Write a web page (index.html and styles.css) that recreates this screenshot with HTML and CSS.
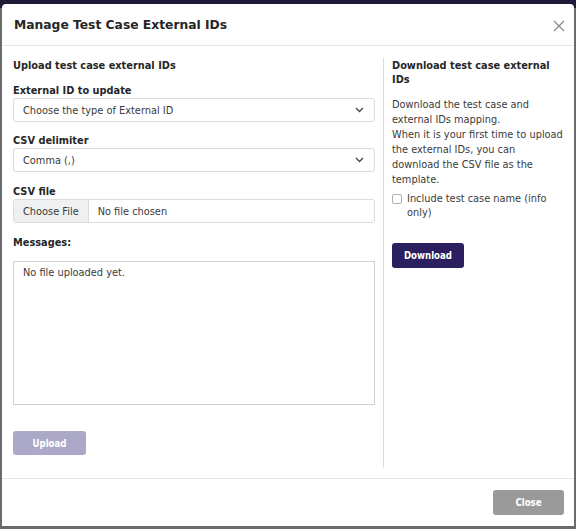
FILE: index.html
```html
<!DOCTYPE html>
<html lang="en">
<head>
  <meta charset="UTF-8" />
  <meta name="viewport" content="width=device-width, initial-scale=1.0" />
  <title>Manage Test Case External IDs</title>
  <link rel="stylesheet" href="styles.css">
</head>
<body>
  <div class="backdrop">
    <div class="modal">
      <div class="modal-header">
        <h1>Manage Test Case External IDs</h1>
        <span class="close-x">
          <svg width="12" height="12" viewBox="0 0 12 12"><path d="M1 1L11 11M11 1L1 11" stroke="#8a8a8a" stroke-width="1.3" fill="none"/></svg>
        </span>
      </div>

      <div class="modal-body">
        <div class="col-upload">
          <h3>Upload test case external IDs</h3>

          <label class="field-label">External ID to update</label>
          <div class="select">
            <span>Choose the type of External ID</span>
            <svg width="9" height="6" viewBox="0 0 9 6"><path d="M1 1L4.5 4.5L8 1" stroke="#444" stroke-width="1.3" fill="none"/></svg>
          </div>

          <label class="field-label">CSV delimiter</label>
          <div class="select">
            <span>Comma (,)</span>
            <svg width="9" height="6" viewBox="0 0 9 6"><path d="M1 1L4.5 4.5L8 1" stroke="#444" stroke-width="1.3" fill="none"/></svg>
          </div>

          <label class="field-label">CSV file</label>
          <div class="file-input">
            <span class="file-btn">Choose File</span>
            <span class="file-name">No file chosen</span>
          </div>

          <label class="field-label messages-label">Messages:</label>
          <div class="messages">No file uploaded yet.</div>

          <button class="btn btn-upload" disabled>Upload</button>
        </div>

        <div class="col-download">
          <h3>Download test case external IDs</h3>
          <p>Download the test case and external IDs mapping.<br>When it is your first time to upload the external IDs, you can download the CSV file as the template.</p>
          <label class="check">
            <span class="box"></span>
            <span>Include test case name (info only)</span>
          </label>
          <button class="btn btn-download">Download</button>
        </div>
      </div>

      <div class="modal-footer">
        <button class="btn btn-close">Close</button>
      </div>
    </div>
  </div>
</body>
</html>
```

FILE: styles.css
```css
body {
  margin: 0;
  font-family: "DejaVu Sans", Verdana, sans-serif;
  color: #333;
  background-color: #6b6b6b;
}
.backdrop {
  width: 576px;
  height: 529px;
  box-sizing: border-box;
  padding: 4px 2px 3px 2px;
  background: linear-gradient(#1d1b38 0, #1d1b38 8px, #6b6b6b 8px);
}
.modal {
  height: 100%;
  background-color: #fff;
  border-radius: 4px 4px 0 0;
  display: flex;
  flex-direction: column;
}
.modal-header {
  height: 41px;
  display: flex;
  align-items: center;
  justify-content: space-between;
  padding: 0 9px 0 12px;
  border-bottom: 1px solid #e6e6e6;
}
h1 {
  margin: 0;
  font-size: 12.3px;
  font-weight: bold;
  color: #262626;
}
.close-x {
  display: flex;
  margin-top: 2px;
}
.modal-body {
  flex: 1;
  display: flex;
  padding: 12px 0 10px 11px;
}
.col-upload {
  width: 362px;
  padding-right: 8px;
  border-right: 1px solid #dcdcdc;
}
.col-download {
  flex: 1;
  padding: 0 10px 0 8px;
}
h3 {
  margin: 0;
  font-size: 9.8px;
  font-weight: bold;
  line-height: 15px;
  color: #262626;
}
.col-upload h3 {
  margin-bottom: 10px;
}
.col-download h3 {
  padding-top: 1px;
  line-height: 14px;
  margin-bottom: 9px;
}
.field-label {
  display: block;
  font-size: 9.8px;
  font-weight: bold;
  line-height: 14px;
  color: #262626;
  padding-top: 1px;
}
.select {
  height: 22px;
  border: 1px solid #dcdcdc;
  border-radius: 3px;
  display: flex;
  align-items: center;
  justify-content: space-between;
  padding: 0 10px 0 9px;
  font-size: 9.8px;
  color: #3a3a3a;
  margin-bottom: 11px;
}
.select + .field-label + .select {
  margin-bottom: 12px;
}
.file-input {
  height: 22px;
  border: 1px solid #dcdcdc;
  border-radius: 3px;
  display: flex;
  font-size: 9.8px;
  color: #3a3a3a;
  margin-bottom: 12px;
  overflow: hidden;
}
.file-btn {
  display: flex;
  align-items: center;
  padding: 0 9px;
  background-color: #eef0f2;
  border-right: 1px solid #dcdcdc;
}
.file-name {
  display: flex;
  align-items: center;
  padding: 0 9px;
}
.messages-label {
  margin-bottom: 11px;
}
.messages {
  height: 135px;
  border: 1px solid #d0d0d0;
  padding: 4px 9px 3px;
  font-size: 9.8px;
  line-height: 14px;
  color: #3a3a3a;
  margin-bottom: 26px;
}
.btn {
  border: none;
  border-radius: 3px;
  color: #fff;
  font-family: "DejaVu Sans Condensed", "DejaVu Sans", sans-serif;
  font-size: 9.6px;
  font-weight: bold;
  height: 25px;
  padding: 0;
}
.btn-upload {
  width: 73px;
  height: 24px;
  background-color: #aca8c8;
}
.col-download p {
  margin: 0 0 5px 0;
  padding-top: 1px;
  font-size: 9.8px;
  line-height: 15px;
  color: #3a3a3a;
}
.check {
  display: flex;
  align-items: flex-start;
  gap: 5px;
  font-size: 9.8px;
  line-height: 14px;
  color: #3a3a3a;
  margin-bottom: 23px;
}
.box {
  width: 8px;
  height: 8px;
  border: 1px solid #b0b0b0;
  border-radius: 2px;
  margin-top: 2px;
  flex: none;
}
.btn-download {
  width: 72px;
  background-color: #2b1f5f;
}
.modal-footer {
  height: 47px;
  border-top: 1px solid #e6e6e6;
  display: flex;
  align-items: center;
  justify-content: flex-end;
  padding-right: 10px;
}
.btn-close {
  width: 71px;
  background-color: #9a9a9a;
}
```
